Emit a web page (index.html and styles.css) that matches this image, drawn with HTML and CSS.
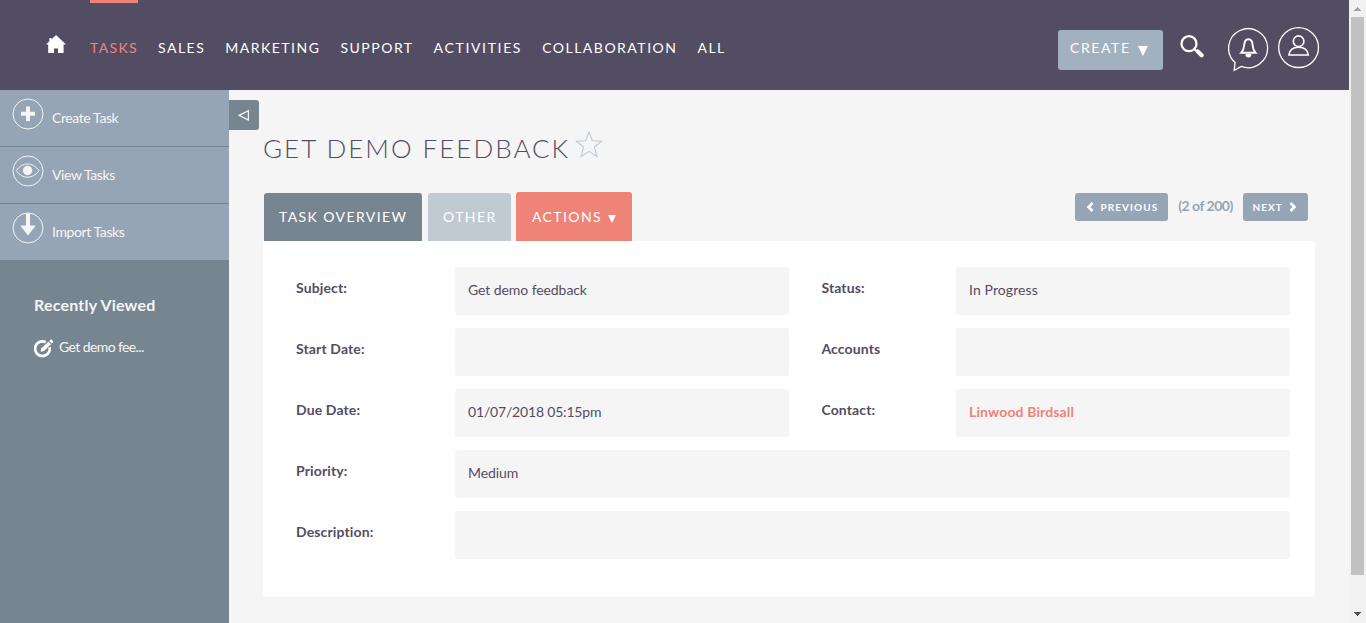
FILE: index.html
```html
<!DOCTYPE html>
<html lang="en">
<head>
<meta charset="utf-8">
<title>Get demo feedback</title>
<link rel="stylesheet" href="styles.css">
</head>
<body>
<div class="window">
  <div class="page">
    <header class="topbar">
      <svg class="home" width="20" height="18" viewBox="0 0 20 18"><path d="M10 0L20 9.4H17.6V18H12V13.6H8V18H2.2V9.4H0L3.4 6.2V3H5.4V4.4Z" fill="#fff"/></svg>
      <nav class="menu">
        <a class="menu-item active">TASKS</a><a class="menu-item">SALES</a><a class="menu-item">MARKETING</a><a class="menu-item">SUPPORT</a><a class="menu-item loose">ACTIVITIES</a><a class="menu-item">COLLABORATION</a><a class="menu-item">ALL</a>
      </nav>
      <div class="tools">
        <button class="create"><span>CREATE</span><svg width="10" height="10" viewBox="0 0 10 10"><path d="M0 0H10L5 10Z" fill="#fff"/></svg></button>
        <svg class="search" width="24" height="23" viewBox="0 0 24 23" fill="none" stroke="#fff"><circle cx="9" cy="8.7" r="7.5" stroke-width="2.3"/><path d="M14.2 14L16.2 16" stroke-width="2"/><path d="M17.8 16.6L21.6 20.2" stroke-width="4.2" stroke-linecap="round"/></svg>
        <svg class="bell" width="42" height="46" viewBox="0 0 42 46" fill="none" stroke="#fff"><path d="M7 35.6A19.5 19.5 0 1 1 13.2 39.4L6.2 43.4Z" stroke-width="1.3"/><path d="M13.2 25.8H27.6C25.7 23.8 24.8 21.5 24.6 18C24.4 14.2 23.2 12.2 20.4 12.2C17.6 12.2 16.4 14.2 16.2 18C16 21.5 15.1 23.8 13.2 25.8Z" stroke-width="1.9"/><path d="M17.6 27H23.2V28.5Q23 30.4 20.4 30.4Q17.8 30.4 17.6 28.5Z" fill="#fff" stroke="none"/></svg>
        <svg class="user" width="42" height="42" viewBox="0 0 42 42" fill="none" stroke="#fff"><circle cx="20.6" cy="20.6" r="19.9" stroke-width="1.3"/><circle cx="20.6" cy="14.2" r="5.3" stroke-width="1.6"/><path d="M10.9 28C11.6 22.6 15.6 20.3 20.6 20.3S29.6 22.6 30.3 28Z" stroke-width="1.6"/></svg>
      </div>
    </header>
    <div class="body">
      <aside class="sidebar">
        <a class="action"><svg width="32" height="32" viewBox="0 0 32 32" fill="none" stroke="#f5f5f5"><circle cx="16" cy="16" r="15"/><path d="M9 15.7H23M16 8.4V23" stroke-width="4"/></svg><span>Create Task</span></a>
        <a class="action"><svg width="32" height="32" viewBox="0 0 32 32" fill="none" stroke="#f5f5f5"><circle cx="16" cy="16" r="15"/><path d="M4.5 15.6C10 6.8 21 6.8 27 15.6C21 24.4 10 24.4 4.5 15.6Z"/><circle cx="15.6" cy="15.5" r="4.7" fill="#f5f5f5" stroke="none"/></svg><span>View Tasks</span></a>
        <a class="action"><svg width="32" height="32" viewBox="0 0 32 32" fill="none" stroke="#f5f5f5"><circle cx="16" cy="16" r="15"/><path d="M14 1.5H18V13.4H23.8L16 23.4L8.2 13.4H14Z" fill="#f5f5f5" stroke="none"/></svg><span>Import Tasks</span></a>
        <h2 class="recent-title">Recently Viewed</h2>
        <a class="recent"><svg width="20" height="20" viewBox="0 0 20 20" fill="none" stroke="#fff"><path d="M11.8 3.2A7.3 7.3 0 1 0 15.6 8.2" stroke-width="2.6"/><path d="M6.6 12.7L7.4 9.2L14.3 2.7L17 5.3L10 12Z" fill="#fff" stroke="none"/><path d="M15.2 1.9L16.4 .8Q17.3 .1 18.4 1.2T18.9 3.4L17.8 4.5Z" fill="#fff" stroke="none"/></svg><span>Get demo fee...</span></a>
      </aside>
      <div class="toggle"><svg width="12" height="12" viewBox="0 0 12 12"><path d="M1.2 6.4L10.4 1.7V11.1Z" fill="none" stroke="#f5f5f5" stroke-width="1.2"/></svg></div>
      <main class="content">
        <div class="heading"><h1>GET DEMO FEEDBACK</h1><svg width="28" height="28" viewBox="0 0 28 28"><path d="M14 1L17.4 9.7L26.6 10.2L19.4 16L21.8 25.5L14 20.4L6.2 25.5L8.6 16L1.4 10.2L10.6 9.7Z" fill="none" stroke="#c0cad3" stroke-width="1.1"/></svg></div>
        <div class="tabs">
          <a class="tab overview">TASK OVERVIEW</a><a class="tab other">OTHER</a><a class="tab actions">ACTIONS <svg width="8" height="8" viewBox="0 0 8 8"><path d="M0 0H8L4 8Z" fill="#fff"/></svg></a>
          <div class="pager">
            <button class="page-btn prev"><svg width="8" height="10" viewBox="0 0 8 10"><path d="M6.5 1L2.5 5L6.5 9" fill="none" stroke="#fff" stroke-width="2.6"/></svg><span>PREVIOUS</span></button>
            <span class="count">(2 of 200)</span>
            <button class="page-btn next"><span>NEXT</span><svg width="8" height="10" viewBox="0 0 8 10"><path d="M1.5 1L5.5 5L1.5 9" fill="none" stroke="#fff" stroke-width="2.6"/></svg></button>
          </div>
        </div>
        <section class="panel">
          <div class="label">Subject:</div><div class="value">Get demo feedback</div><div class="label second">Status:</div><div class="value status">In Progress</div>
          <div class="label">Start Date:</div><div class="value"></div><div class="label second">Accounts</div><div class="value"></div>
          <div class="label">Due Date:</div><div class="value date">01/07/2018 05:15pm</div><div class="label second">Contact:</div><div class="value"><a class="link">Linwood Birdsall</a></div>
          <div class="label">Priority:</div><div class="value wide">Medium</div>
          <div class="label">Description:</div><div class="value wide"></div>
        </section>
      </main>
    </div>
  </div>
  <div class="scrollbar">
    <svg width="17" height="17" viewBox="0 0 17 17" shape-rendering="crispEdges"><path d="M5 11H12L8.5 7Z" fill="#a3a3a3"/></svg>
    <div class="thumb"></div>
    <svg width="17" height="17" viewBox="0 0 17 17" shape-rendering="crispEdges"><path d="M5 6H12L8.5 10Z" fill="#505050"/></svg>
  </div>
</div>
</body>
</html>
```

FILE: styles.css
```css
* { box-sizing: border-box; }
body { margin: 0; font-family: Lato, "Liberation Sans", sans-serif; font-size: 14px; color: #534d64; }
h1, h2 { margin: 0; }
svg { display: block; flex: none; }
button { border: 0; font-family: inherit; color: #fff; margin: 0; }
.window { display: flex; width: 1366px; height: 623px; overflow: hidden; background: #f5f5f5; }
.page { width: 1349px; display: flex; flex-direction: column; }
.topbar { height: 90px; flex: none; background: #534d64; display: flex; align-items: flex-start; padding-left: 46px; }
.home { margin-top: 35px; }
.menu { display: flex; gap: 20px; margin-left: 24px; }
.menu-item { color: #fff; font-size: 14px; line-height: 18px; letter-spacing: 1.5px; padding-top: 36px; border-top: 3px solid transparent; white-space: nowrap; }
.menu-item.active { color: #f08377; border-color: #f08377; letter-spacing: 1.35px; }
.menu-item.loose { letter-spacing: 1.65px; }
.tools { margin-left: auto; display: flex; padding-right: 29px; }
.create { width: 105px; height: 40px; margin-top: 30px; border-radius: 3px; background: #a2b1bf; display: flex; align-items: center; padding: 0 0 5px 12px; font-size: 14px; letter-spacing: 1.6px; }
.create svg { margin: 7px 0 0 7px; }
.search { margin: 35px 0 0 17px; }
.bell { margin: 27px 0 0 24px; }
.user { margin: 27px 0 0 8px; }
.body { flex: 1; display: flex; align-items: flex-start; }
.sidebar { width: 229px; height: 533px; background: #778591; color: #f5f5f5; }
.action { display: flex; height: 57px; padding: 8px 0 0 12px; background: #95a5b5; border-bottom: 1px solid #778591; }
.action span { margin: 11px 0 0 8px; line-height: 18px; letter-spacing: -.4px; }
.recent-title { padding: 34px 0 0 34px; font-size: 16px; line-height: 20px; font-weight: 700; letter-spacing: .2px; }
.recent { display: flex; align-items: center; padding: 24px 0 0 34px; }
.recent span { margin: -6px 0 0 5px; letter-spacing: -.6px; }
.toggle { width: 30px; height: 30px; margin-top: 10px; background: #778591; border-radius: 0 3px 3px 0; display: flex; align-items: center; justify-content: center; }
.content { width: 1052px; margin-left: 4px; }
.heading { height: 102px; display: flex; padding-top: 40px; }
.heading h1 { font-size: 26px; font-weight: 300; line-height: 36px; letter-spacing: 2px; white-space: nowrap; }
.heading svg { margin: 1px 0 0 5px; }
.tabs { height: 49px; display: flex; align-items: flex-end; padding-left: 1px; }
.tab { height: 48px; display: flex; align-items: center; color: #fff; letter-spacing: 1.4px; border-radius: 3px 3px 0 0; white-space: nowrap; padding-left: 15px; }
.overview { width: 158px; padding-bottom: 1px; background: #778591; }
.other { width: 83px; padding-bottom: 1px; margin-left: 6px; background: #bfcad3; }
.actions { width: 116px; height: 49px; margin-left: 5px; padding-left: 16px; background: #f08377; }
.actions svg { margin: 4px 0 0 6px; }
.pager { align-self: flex-start; margin: 1px 7px 0 auto; display: flex; }
.page-btn { height: 28px; background: #95a5b5; border-radius: 3px; display: flex; align-items: center; padding: 0; font-size: 10px; font-weight: 700; letter-spacing: 1.05px; }
.prev { width: 93px; padding-left: 10.5px; gap: 7px; }
.next { width: 65px; padding-left: 9.5px; gap: 6px; }
.count { width: 75px; text-align: center; color: #95a5b5; font-weight: 700; line-height: 26px; letter-spacing: -.5px; white-space: nowrap; }
.panel { height: 356px; background: #fff; border-radius: 0 4px 4px 4px; padding: 26px 25px 0 33px; display: grid; grid-template-columns: 159px 334px 167px 334px; grid-auto-rows: 48px; row-gap: 13px; align-content: start; }
.label { padding-top: 12px; line-height: 18px; font-weight: 700; letter-spacing: .13px; }
.second { padding-left: 32.4px; }
.value { background: #f5f5f5; border-radius: 3px; padding: 14px 13px; line-height: 18px; letter-spacing: -.08px; }
.value.status { letter-spacing: .1px; }
.value.date { letter-spacing: -.18px; }
.wide { grid-column: span 3; }
.link { color: #f08377; font-weight: 700; letter-spacing: .12px; }
.scrollbar { width: 17px; background: #f1f1f1; display: flex; flex-direction: column; align-items: center; }
.thumb { width: 13px; height: 558px; margin-bottom: 31px; background: #c1c1c1; }
```
